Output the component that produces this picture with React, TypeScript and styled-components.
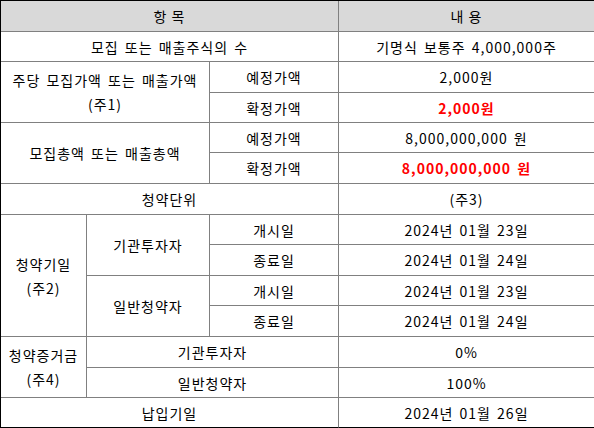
import styled, { createGlobalStyle } from "styled-components";

const GlobalStyle = createGlobalStyle`
  html, body {
    margin: 0;
    padding: 0;
    background: #fff;
    overflow: hidden;
  }
`;

const Table = styled.table`
  width: 594px;
  table-layout: fixed;
  border-collapse: separate;
  border-spacing: 0;
  border-top: 1px solid #000;
  border-left: 1px solid #000;
  font-family: "Noto Sans CJK KR", "Noto Sans", sans-serif;
  font-size: 14px;
  letter-spacing: 1px;
  color: #000;
`;

const Row = styled.tr<{ $h: number }>`
  height: ${(p) => p.$h}px;
`;

const Head = styled.th`
  background: #d9d9d9;
  font-weight: normal;
  padding: 0;
  text-align: center;
  vertical-align: middle;
  border-right: 1px solid #808080;
  border-bottom: 1px solid #808080;
  &:last-child {
    border-right: none;
  }
`;

const Cell = styled.td<{ $last?: boolean; $end?: boolean }>`
  padding: 0;
  text-align: center;
  vertical-align: middle;
  line-height: 24px;
  white-space: nowrap;
  border-right: ${(p) => (p.$end ? "none" : "1px solid #808080")};
  border-bottom: 1px solid ${(p) => (p.$last ? "#000" : "#808080")};
`;

const Strong = styled.span`
  color: #ff0000;
  font-weight: bold;
`;

const Gap = styled.span`
  word-spacing: 2px;
`;

export default function App() {
  return (
    <>
      <GlobalStyle />
      <Table>
        <colgroup>
          <col style={{ width: 86 }} />
          <col style={{ width: 123 }} />
          <col style={{ width: 129 }} />
          <col style={{ width: 255 }} />
        </colgroup>
        <tbody>
          <Row $h={31}>
            <Head colSpan={3}>항 목</Head>
            <Head>내 용</Head>
          </Row>
          <Row $h={30}>
            <Cell colSpan={3}><Gap>모집 또는 매출주식의 수</Gap></Cell>
            <Cell $end><Gap>기명식 보통주 4,000,000주</Gap></Cell>
          </Row>
          <Row $h={31}>
            <Cell colSpan={2} rowSpan={2}>
              <Gap>주당 모집가액 또는 매출가액</Gap>
              <br />
              (주1)
            </Cell>
            <Cell>예정가액</Cell>
            <Cell $end>2,000원</Cell>
          </Row>
          <Row $h={30}>
            <Cell>확정가액</Cell>
            <Cell $end><Strong>2,000원</Strong></Cell>
          </Row>
          <Row $h={30}>
            <Cell colSpan={2} rowSpan={2}><Gap>모집총액 또는 매출총액</Gap></Cell>
            <Cell>예정가액</Cell>
            <Cell $end><Gap>8,000,000,000 원</Gap></Cell>
          </Row>
          <Row $h={31}>
            <Cell>확정가액</Cell>
            <Cell $end><Strong><Gap>8,000,000,000 원</Gap></Strong></Cell>
          </Row>
          <Row $h={31}>
            <Cell colSpan={3}>청약단위</Cell>
            <Cell $end>(주3)</Cell>
          </Row>
          <Row $h={30}>
            <Cell rowSpan={4}>
              청약기일
              <br />
              (주2)
            </Cell>
            <Cell rowSpan={2}>기관투자자</Cell>
            <Cell>개시일</Cell>
            <Cell $end><Gap>2024년 01월 23일</Gap></Cell>
          </Row>
          <Row $h={31}>
            <Cell>종료일</Cell>
            <Cell $end><Gap>2024년 01월 24일</Gap></Cell>
          </Row>
          <Row $h={30}>
            <Cell rowSpan={2}>일반청약자</Cell>
            <Cell>개시일</Cell>
            <Cell $end><Gap>2024년 01월 23일</Gap></Cell>
          </Row>
          <Row $h={31}>
            <Cell>종료일</Cell>
            <Cell $end><Gap>2024년 01월 24일</Gap></Cell>
          </Row>
          <Row $h={31}>
            <Cell rowSpan={2}>
              청약증거금
              <br />
              (주4)
            </Cell>
            <Cell colSpan={2}>기관투자자</Cell>
            <Cell $end>0%</Cell>
          </Row>
          <Row $h={30}>
            <Cell colSpan={2}>일반청약자</Cell>
            <Cell $end>100%</Cell>
          </Row>
          <Row $h={30}>
            <Cell colSpan={3} $last>납입기일</Cell>
            <Cell $last $end><Gap>2024년 01월 26일</Gap></Cell>
          </Row>
        </tbody>
      </Table>
    </>
  );
}
